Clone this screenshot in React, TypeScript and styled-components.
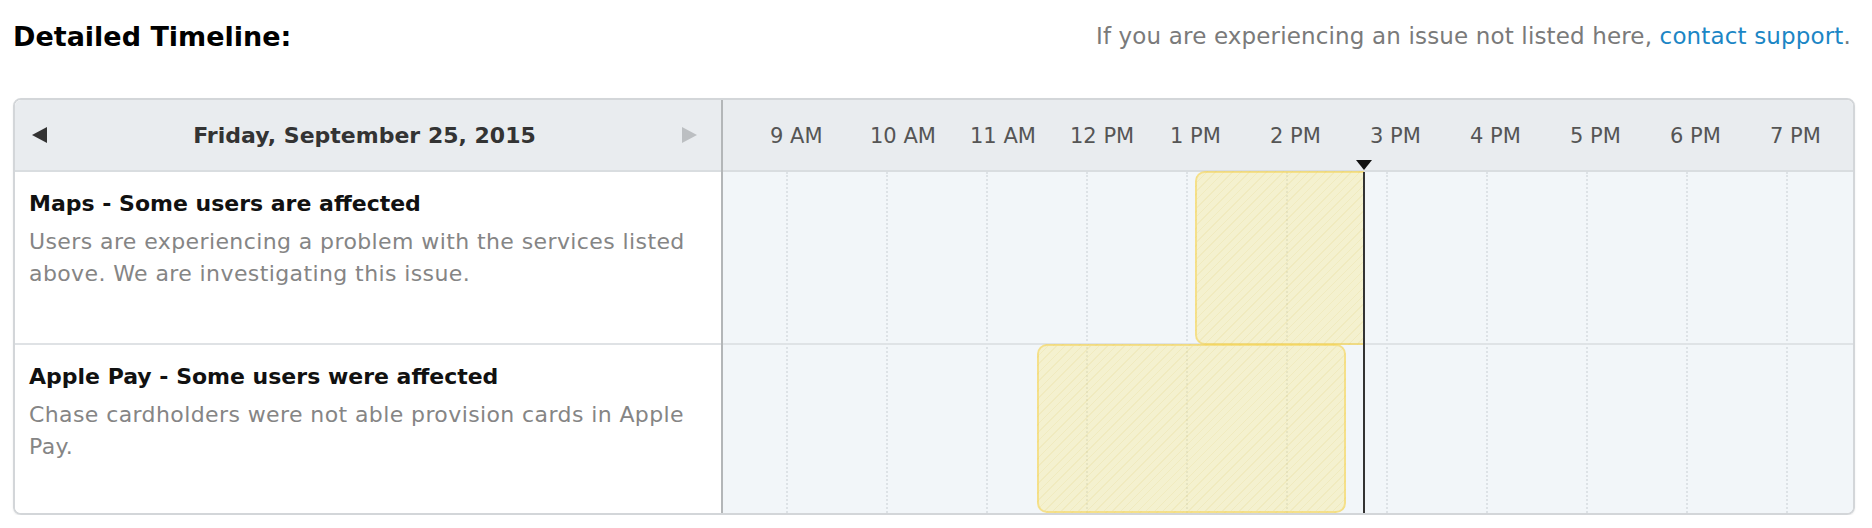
import styled, { createGlobalStyle } from 'styled-components';

type Incident = {
    id: string;
    title: string;
    description: string;
    start: number;
    end: number;
    ongoing: boolean;
    height: number;
}

const HOURS = ['9 AM', '10 AM', '11 AM', '12 PM', '1 PM', '2 PM', '3 PM', '4 PM', '5 PM', '6 PM', '7 PM'];
const HOUR_WIDTH = 100;
const FIRST_TICK = 64;
const NOW = 641;

const INCIDENTS: Incident[] = [
    {
        id: 'maps',
        title: 'Maps - Some users are affected',
        description: 'Users are experiencing a problem with the services listed above. We are investigating this issue.',
        start: 472,
        end: NOW,
        ongoing: true,
        height: 171,
    },
    {
        id: 'applepay',
        title: 'Apple Pay - Some users were affected',
        description: 'Chase cardholders were not able provision cards in Apple Pay.',
        start: 314,
        end: 623,
        ongoing: false,
        height: 168,
    },
];

const GlobalStyle = createGlobalStyle`
    html, body {
        margin: 0;
        background: #fff;
    }
    body {
        font-family: "DejaVu Sans", "Lucida Grande", Verdana, sans-serif;
    }
`;

const Page = styled.div`
    padding: 0 17px 0 13px;
`;

const TopBar = styled.div`
    display: flex;
    justify-content: space-between;
    align-items: center;
    height: 72px;
`;

const Heading = styled.h2`
    margin: 0;
    font-size: 27px;
    font-weight: bold;
    color: #000;
`;

const Note = styled.p`
    margin: 0;
    padding-right: 4px;
    font-size: 23px;
    letter-spacing: 0.15px;
    color: #7a7a7a;
`;

const SupportLink = styled.a`
    color: #1b86c5;
    text-decoration: none;
`;

const Panel = styled.div`
    margin-top: 26px;
    display: flex;
    height: 413px;
    border: 2px solid #d3d6d9;
    border-radius: 8px;
    overflow: hidden;
    box-shadow: 0 1px 2px rgba(0, 0, 0, 0.08);
`;

const LeftColumn = styled.div`
    flex: 0 0 706px;
    display: flex;
    flex-direction: column;
    border-right: 2px solid #b3b6b8;
    background: #fff;
`;

const DayHeader = styled.div`
    flex: 0 0 70px;
    display: flex;
    align-items: center;
    justify-content: space-between;
    padding: 0 24px 0 17px;
    background: #e9ecef;
    border-bottom: 2px solid #d9dde0;
`;

const DateLabel = styled.div`
    font-size: 22px;
    font-weight: bold;
    color: #333;
`;

const IncidentRow = styled.div<{ $height: number; $divider: boolean }>`
    height: ${p => p.$height}px;
    padding: 18px 14px 0;
    border-bottom: ${p => (p.$divider ? '2px solid #dfe2e5' : 'none')};
`;

const RowTitle = styled.div`
    font-size: 22px;
    font-weight: bold;
    line-height: 28px;
    color: #111;
`;

const RowText = styled.div`
    margin-top: 8px;
    font-size: 22px;
    letter-spacing: 0.4px;
    line-height: 32px;
    color: #858585;
`;

const TimelineColumn = styled.div`
    flex: 1;
    display: flex;
    flex-direction: column;
    box-shadow: inset 2px 0 2px rgba(0, 0, 0, 0.06);
`;

const TimeHeader = styled.div`
    position: relative;
    flex: 0 0 70px;
    background: #e9ecef;
    border-bottom: 2px solid #d9dde0;
`;

const HourLabel = styled.span`
    position: absolute;
    top: 0;
    line-height: 72px;
    font-size: 21px;
    color: #555;
    white-space: nowrap;
`;

const NowMarker = styled.svg`
    position: absolute;
    bottom: 0;
    margin-left: -8px;
`;

const TimeBody = styled.div`
    position: relative;
    flex: 1;
    background: #f2f6f9;
`;

const GridLine = styled.div`
    position: absolute;
    top: 0;
    bottom: 0;
    border-left: 2px dotted #dde2e6;
`;

const Lane = styled.div<{ $height: number; $divider: boolean }>`
    position: relative;
    height: ${p => p.$height}px;
    border-bottom: ${p => (p.$divider ? '2px solid #dfe3e6' : 'none')};
`;

const Bar = styled.div<{ $ongoing: boolean }>`
    position: absolute;
    top: -1px;
    bottom: ${p => (p.$ongoing ? '-2px' : '0')};
    box-sizing: border-box;
    border: 2px solid rgba(245, 208, 70, 0.5);
    border-right-width: ${p => (p.$ongoing ? 0 : 2)}px;
    border-radius: ${p => (p.$ongoing ? '10px 0 0 10px' : '10px')};
    background-color: rgba(250, 232, 125, 0.34);
    background-image: repeating-linear-gradient(
        135deg,
        rgba(215, 195, 90, 0.14) 0 1px,
        transparent 1px 6px
    );
`;

const NowLine = styled.div`
    position: absolute;
    top: 0;
    bottom: 0;
    width: 2px;
    margin-left: -1px;
    background: #333;
`;

function Arrow({ dir, color }: { dir: 'left' | 'right'; color: string }) {
    const points = dir === 'left' ? '15,0 15,16 0,8' : '0,0 0,16 15,8';
    return (
        <svg width="15" height="16" viewBox="0 0 15 16">
            <polygon points={points} fill={color} />
        </svg>
    );
}

export default function App() {
    return (
        <>
            <GlobalStyle />
            <Page>
                <TopBar>
                    <Heading>Detailed Timeline:</Heading>
                    <Note>
                        If you are experiencing an issue not listed here, <SupportLink href="#">contact support</SupportLink>.
                    </Note>
                </TopBar>
                <Panel>
                    <LeftColumn>
                        <DayHeader>
                            <Arrow dir="left" color="#333" />
                            <DateLabel>Friday, September 25, 2015</DateLabel>
                            <Arrow dir="right" color="#bcbfc2" />
                        </DayHeader>
                        {INCIDENTS.map((inc, i) => (
                            <IncidentRow key={inc.id} $height={inc.height} $divider={i < INCIDENTS.length - 1}>
                                <RowTitle>{inc.title}</RowTitle>
                                <RowText>{inc.description}</RowText>
                            </IncidentRow>
                        ))}
                    </LeftColumn>
                    <TimelineColumn>
                        <TimeHeader>
                            {HOURS.map((h, i) => (
                                <HourLabel key={h} style={{ left: FIRST_TICK + i * HOUR_WIDTH - 17 }}>{h}</HourLabel>
                            ))}
                            <NowMarker width="16" height="10" viewBox="0 0 16 10" style={{ left: NOW }}>
                                <polygon points="0,0 16,0 8,10" fill="#111" />
                            </NowMarker>
                        </TimeHeader>
                        <TimeBody>
                            {HOURS.map((h, i) => (
                                <GridLine key={h} style={{ left: FIRST_TICK + i * HOUR_WIDTH - 1 }} />
                            ))}
                            {INCIDENTS.map((inc, i) => (
                                <Lane key={inc.id} $height={inc.height} $divider={i < INCIDENTS.length - 1}>
                                    <Bar $ongoing={inc.ongoing} style={{ left: inc.start, width: inc.end - inc.start }} />
                                </Lane>
                            ))}
                            <NowLine style={{ left: NOW }} />
                        </TimeBody>
                    </TimelineColumn>
                </Panel>
            </Page>
        </>
    );
}
